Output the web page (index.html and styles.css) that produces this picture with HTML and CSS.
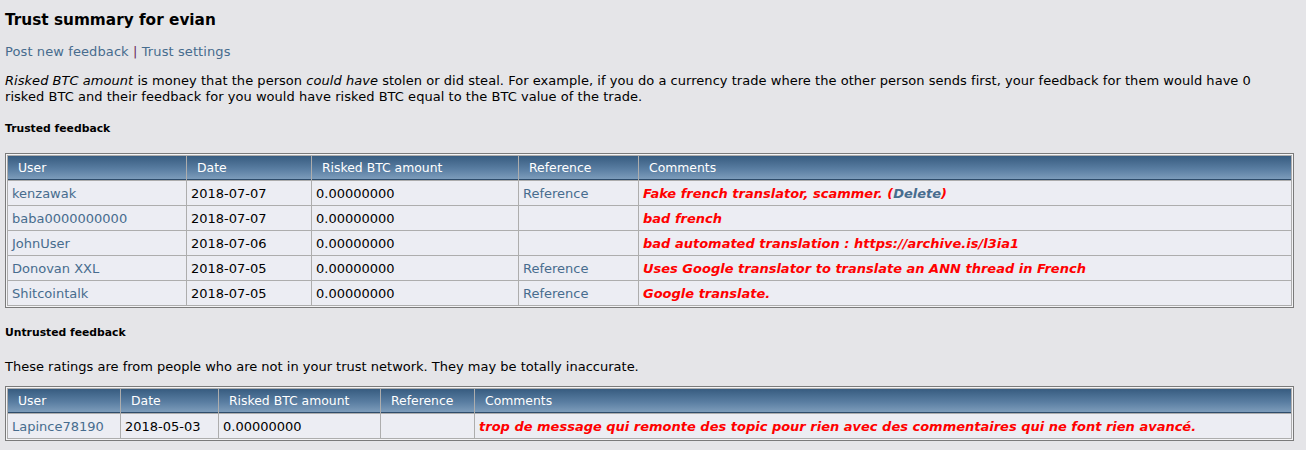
FILE: index.html
```html
<!DOCTYPE html>
<html>
<head>
<meta charset="utf-8">
<title>Trust summary for evian</title>
<link rel="stylesheet" href="styles.css">
</head>
<body>
<div class="page">
  <h2 class="title">Trust summary for evian</h2>
  <div class="links"><a href="#">Post new feedback</a> <span class="sep">|</span> <a href="#">Trust settings</a></div>
  <p class="intro"><i>Risked BTC amount</i> is money that the person <i>could have</i> stolen or did steal. For example, if you do a currency trade where the other person sends first, your feedback for them would have 0 risked BTC and their feedback for you would have risked BTC equal to the BTC value of the trade.</p>

  <h3 class="section">Trusted feedback</h3>
  <div class="tborder t1">
    <table class="grid">
      <thead>
        <tr>
          <th class="c-user">User</th>
          <th class="c-date">Date</th>
          <th class="c-risk">Risked BTC amount</th>
          <th class="c-ref">Reference</th>
          <th>Comments</th>
        </tr>
      </thead>
      <tbody>
        <tr><td><a href="#">kenzawak</a></td><td>2018-07-07</td><td>0.00000000</td><td><a href="#">Reference</a></td><td class="cm">Fake french translator, scammer. (<a href="#">Delete</a>)</td></tr>
        <tr><td><a href="#">baba0000000000</a></td><td>2018-07-07</td><td>0.00000000</td><td></td><td class="cm">bad french</td></tr>
        <tr><td><a href="#">JohnUser</a></td><td>2018-07-06</td><td>0.00000000</td><td></td><td class="cm">bad automated translation : https://archive.is/l3ia1</td></tr>
        <tr><td><a href="#">Donovan XXL</a></td><td>2018-07-05</td><td>0.00000000</td><td><a href="#">Reference</a></td><td class="cm">Uses Google translator to translate an ANN thread in French</td></tr>
        <tr><td><a href="#">Shitcointalk</a></td><td>2018-07-05</td><td>0.00000000</td><td><a href="#">Reference</a></td><td class="cm">Google translate.</td></tr>
      </tbody>
    </table>
  </div>

  <h3 class="section sec2">Untrusted feedback</h3>
  <p class="note">These ratings are from people who are not in your trust network. They may be totally inaccurate.</p>
  <div class="tborder t2">
    <table class="grid">
      <thead>
        <tr>
          <th class="c2-user">User</th>
          <th class="c2-date">Date</th>
          <th class="c2-risk">Risked BTC amount</th>
          <th class="c2-ref">Reference</th>
          <th>Comments</th>
        </tr>
      </thead>
      <tbody>
        <tr><td><a href="#">Lapince78190</a></td><td>2018-05-03</td><td>0.00000000</td><td></td><td class="cm">trop de message qui remonte des topic pour rien avec des commentaires qui ne font rien avancé.</td></tr>
      </tbody>
    </table>
  </div>
</div>
</body>
</html>
```

FILE: styles.css
```css
html, body {
  margin: 0;
  padding: 0;
  background: #e5e5e8;
}
body {
  font-family: "DejaVu Sans", Verdana, sans-serif;
  font-size: 13px;
  color: #000;
}
.page {
  padding: 11px 12px 0 5px;
}
a {
  color: #476c8e;
  text-decoration: none;
}
.title {
  margin: 0;
  font-size: 15.3px;
  line-height: 19px;
  font-weight: bold;
}
.links {
  margin-top: 14px;
  line-height: 16px;
  letter-spacing: 0.1px;
}
.sep {
  color: #6a2d5c;
}
.intro {
  margin: 13px 0 0;
  line-height: 16px;
  max-width: 1262px;
  letter-spacing: 0.04px;
}
.section {
  margin: 17px 0 0;
  font-size: 10.8px;
  line-height: 14px;
  font-weight: bold;
}
.sec2 {
  margin-top: 18px;
}
.note {
  margin: 19px 0 0;
  line-height: 16px;
}
.tborder {
  border: 1px solid #7a7a7a;
  padding: 1px;
  background: #f4f4f6;
}
.t1 {
  margin-top: 17px;
}
.t2 {
  margin-top: 11px;
}
.grid {
  width: 100%;
  table-layout: fixed;
  border-collapse: separate;
  border-spacing: 1px;
  background: #adadad;
}
.grid th,
.grid td {
  box-sizing: border-box;
  padding: 4px;
  line-height: 16px;
  text-align: left;
  white-space: nowrap;
  overflow: hidden;
}
.grid td {
  padding-top: 5px;
  padding-bottom: 3px;
}
.grid th {
  font-weight: normal;
  font-size: 12.4px;
  color: #fff;
  padding-left: 10px;
  background: linear-gradient(#375c80, #5a7ea2 55%, #809fbd);
  box-shadow: inset 0 -1px 0 #2e4c6b;
}
.grid td {
  background: #ecedf3;
}
.grid td.cm {
  color: #ff0000;
  font-weight: bold;
  font-style: italic;
}
.c-user { width: 178px; }
.c-date { width: 124px; }
.c-risk { width: 206px; }
.c-ref { width: 119px; }
.c2-user { width: 112px; }
.c2-date { width: 97px; }
.c2-risk { width: 161px; }
.c2-ref { width: 93px; }
```
